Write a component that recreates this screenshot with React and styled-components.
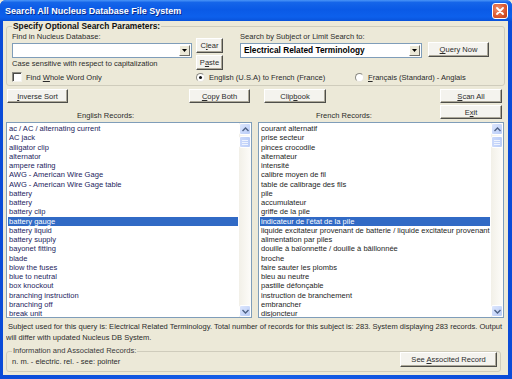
import React from 'react';
import styled, { createGlobalStyle } from 'styled-components';

const GlobalStyle = createGlobalStyle`
  html, body { margin: 0; padding: 0; background: #ECE9D8; }
  body { font-family: "Liberation Sans", Arial, sans-serif; font-size: 7.55px; color: #2b2b2b; }
  * { box-sizing: border-box; }
`;

const englishRecords = [
  'ac / AC / alternating current', 'AC jack', 'alligator clip', 'alternator', 'ampere rating',
  'AWG - American Wire Gage', 'AWG - American Wire Gage table', 'battery', 'battery', 'battery clip',
  'battery gauge', 'battery liquid', 'battery supply', 'bayonet fitting', 'blade', 'blow the fuses',
  'blue to neutral', 'box knockout', 'branching instruction', 'branching off', 'break unit',
];

const frenchRecords = [
  'courant alternatif', 'prise secteur', 'pinces crocodile', 'alternateur', 'intensité',
  'calibre moyen de fil', 'table de calibrage des fils', 'pile', 'accumulateur', 'griffe de la pile',
  "indicateur de l'état de la pile",
  'liquide excitateur provenant de batterie / liquide excitateur provenant de pile',
  'alimentation par piles', 'douille à baïonnette / douille à bâillonnée', 'broche',
  'faire sauter les plombs', 'bleu au neutre', 'pastille défonçable', 'instruction de branchement',
  'embrancher', 'disjoncteur',
];

const SELECTED = 10;

// window frame
const Window = styled.div`
  width: 512px;
  height: 379px;
  display: flex;
  flex-direction: column;
  background: linear-gradient(to right, #0A4BD8, #1660E8 50%, #0A4BD8);
  border-radius: 6px 6px 0 0;
  overflow: hidden;
`;

const TitleBar = styled.div`
  height: 21px;
  flex: none;
  display: flex;
  align-items: center;
  justify-content: space-between;
  padding: 0 4px 0 5px;
  background: linear-gradient(to bottom, #4A95F7 0%, #1565E9 12%, #0A5AE6 45%, #0D60EC 80%, #0852DA 100%);
  color: #fff;
  font-weight: bold;
  font-size: 9px;
  text-shadow: 1px 1px 0 #0B2A8A;
`;

const CloseButton = styled.div`
  width: 16px;
  height: 16px;
  border: 1px solid #fff;
  border-radius: 3px;
  background: radial-gradient(circle at 35% 35%, #F0906E, #D9572E 60%, #B83A17);
  display: flex;
  align-items: center;
  justify-content: center;
`;

const Body = styled.div`
  flex: 1;
  margin: 0 4px 4px 3px;
  padding: 0 3px 0 3px;
  background: #ECE9D8;
  display: flex;
  flex-direction: column;
`;

const GroupBox = styled.fieldset`
  margin: ${({ $mt }) => $mt || 0}px ${({ $mr }) => $mr || 0}px 0 0;
  padding: ${({ $pad }) => $pad};
  border: 1px solid #CFCCBC;
  border-radius: 3px;
  min-width: 0;
`;

const Legend = styled.legend`
  padding: 0 1px;
  line-height: 10px;
  font-size: ${({ $bold }) => ($bold ? '8.4px' : '7.55px')};
  font-weight: ${({ $bold }) => ($bold ? 'bold' : 'normal')};
  color: ${({ $bold }) => ($bold ? '#111' : '#3a3a3a')};
`;

const TopRow = styled.div`
  display: flex;
  align-items: flex-start;
`;

const Column = styled.div`
  display: flex;
  flex-direction: column;
  width: ${({ $w }) => ($w ? `${$w}px` : 'auto')};
  margin-left: ${({ $ml }) => $ml || 0}px;
  padding-top: ${({ $pt }) => $pt || 0}px;
  gap: ${({ $gap }) => $gap || 0}px;
`;

const Label = styled.div`
  line-height: 10px;
  white-space: nowrap;
  margin-top: ${({ $mt }) => $mt || 0}px;
`;

const Combo = styled.div`
  display: flex;
  width: ${({ $w }) => $w}px;
  height: 15px;
  margin-top: 1px;
  border: 1px solid #7F9DB9;
  background: #fff;
  padding: 1px;
`;

const ComboText = styled.div`
  flex: 1;
  padding-left: 2px;
  line-height: 11px;
  font-size: 8.3px;
  font-weight: bold;
  color: #000;
  white-space: nowrap;
  overflow: hidden;
`;

const DropButton = styled.div`
  width: 11px;
  background: #ECE9D8;
  border: 1px solid;
  border-color: #fff #6E6D67 #6E6D67 #fff;
  display: flex;
  align-items: center;
  justify-content: center;
`;

const Button = styled.div`
  width: ${({ $w }) => $w}px;
  height: ${({ $h }) => $h || 14}px;
  margin: ${({ $m }) => $m || 0};
  background: #F4F3EE;
  border: 1px solid;
  border-color: #FFFFFF #4E4E4A #4E4E4A #FFFFFF;
  box-shadow: inset -1px -1px 0 #ACA899;
  display: flex;
  align-items: center;
  justify-content: center;
  color: #2b2b2b;
  white-space: nowrap;
  grid-column: ${({ $col }) => $col || 'auto'};
  grid-row: ${({ $row }) => $row || 'auto'};
  align-self: ${({ $align }) => $align || 'auto'};

  u { text-decoration-thickness: 1px; text-underline-offset: 1px; }
`;

const OptionRow = styled.div`
  display: flex;
  align-items: center;
  height: 10px;
  margin-top: 2px;
`;

const Option = styled.div`
  display: flex;
  align-items: center;
  width: ${({ $w }) => ($w ? `${$w}px` : 'auto')};
  gap: 4px;
  white-space: nowrap;
`;

const CheckBox = styled.div`
  width: 10px;
  height: 10px;
  background: #fff;
  border: 1px solid;
  border-color: #8C8B82 #F4F3EE #F4F3EE #8C8B82;
  box-shadow: inset 1px 1px 0 #4A4A46;
`;

const Radio = styled.div`
  width: 9px;
  height: 9px;
  border-radius: 50%;
  background: #fff;
  border: 1px solid #8C8B82;
  border-right-color: #E8E6DC;
  border-bottom-color: #E8E6DC;
  display: flex;
  align-items: center;
  justify-content: center;

  &::after {
    content: '';
    width: 3px;
    height: 3px;
    border-radius: 50%;
    background: ${({ $on }) => ($on ? '#111' : 'transparent')};
  }
`;

const Panels = styled.div`
  display: grid;
  grid-template-columns: 246px 246px;
  column-gap: 6px;
  margin-top: 3px;
`;

const Panel = styled.div`
  display: grid;
  grid-template-columns: ${({ $cols }) => $cols};
  grid-template-rows: 14px 19px 196px;
`;

const PanelLabel = styled.div`
  grid-row: 2;
  grid-column: 1;
  align-self: end;
  line-height: 10px;
  padding-bottom: 1px;
  padding-left: ${({ $pl }) => $pl}px;
`;

const ListBox = styled.div`
  grid-row: 3;
  grid-column: 1 / -1;
  display: flex;
  border: 1px solid #7F9DB9;
  background: #fff;
`;

const Items = styled.div`
  flex: 1;
  min-width: 0;
  padding-top: 1px;
  overflow: hidden;
`;

const Item = styled.div`
  height: 9.25px;
  line-height: 9.25px;
  margin: 0 1px;
  padding-left: 1px;
  white-space: nowrap;
  color: ${({ $sel, $fg }) => ($sel ? '#fff' : $fg)};
  background: ${({ $sel }) => ($sel ? '#316AC5' : 'transparent')};
`;

const ScrollBar = styled.div`
  width: 12px;
  display: flex;
  flex-direction: column;
  background: linear-gradient(to right, #F2F0E8, #FDFCF9);
`;

const ScrollArrow = styled.div`
  height: 12px;
  border: 1px solid #fff;
  border-radius: 2px;
  background: linear-gradient(to bottom right, #DCE6FD, #B9CCF7);
  display: flex;
  align-items: center;
  justify-content: center;
  margin-top: ${({ $bottom }) => ($bottom ? 'auto' : '0')};
`;

const Thumb = styled.div`
  height: 12px;
  margin-top: 1px;
  border: 1px solid #fff;
  border-radius: 2px;
  background: linear-gradient(to right, #CBD9FB, #BACDF7);
  display: flex;
  flex-direction: column;
  align-items: center;
  justify-content: center;
  gap: 1px;

  span {
    width: 6px;
    height: 1px;
    background: #EEF3FE;
  }
`;

const StatusText = styled.div`
  margin-top: ${({ $first }) => ($first ? 3 : 0)}px;
  line-height: 11px;
  text-indent: ${({ $first }) => ($first ? 2 : 0)}px;
  white-space: nowrap;
  overflow: hidden;
`;

const InfoRow = styled.div`
  display: flex;
  justify-content: space-between;
  align-items: flex-start;
  margin-top: -4px;
`;

const InfoText = styled.div`
  margin-top: 5px;
  line-height: 10px;
`;

const Chevron = ({ down }) => (
  <svg width="7" height="5" viewBox="0 0 7 5">
    <path d={down ? 'M0.5 1 L3.5 4 L6.5 1' : 'M0.5 4 L3.5 1 L6.5 4'} fill="none" stroke="#4D6185" strokeWidth="1.4" />
  </svg>
);

const Triangle = () => (
  <svg width="5" height="3" viewBox="0 0 5 3">
    <path d="M0 0 H5 L2.5 3 Z" fill="#000" />
  </svg>
);

const List = ({ items, fg }) => (
  <ListBox>
    <Items>
      {items.map((t, i) => (
        <Item key={i} $sel={i === SELECTED} $fg={fg}>{t}</Item>
      ))}
    </Items>
    <ScrollBar>
      <ScrollArrow><Chevron /></ScrollArrow>
      <Thumb><span /><span /><span /></Thumb>
      <ScrollArrow $bottom><Chevron down /></ScrollArrow>
    </ScrollBar>
  </ListBox>
);

export default function App() {
  return (
    <>
      <GlobalStyle />
      <Window>
        <TitleBar>
          <span>Search All Nucleus Database File System</span>
          <CloseButton>
            <svg width="8" height="8" viewBox="0 0 8 8">
              <path d="M1 1 L7 7 M7 1 L1 7" stroke="#fff" strokeWidth="1.8" strokeLinecap="round" />
            </svg>
          </CloseButton>
        </TitleBar>
        <Body>
          <GroupBox $pad="1px 5px 3px 5px">
            <Legend $bold>Specify Optional Search Parameters:</Legend>
            <TopRow>
              <Column $w={180}>
                <Label>Find in Nucleus Database:</Label>
                <Combo $w={180}>
                  <ComboText />
                  <DropButton><Triangle /></DropButton>
                </Combo>
                <Label $mt={1}>Case sensitive with respect to capitalization</Label>
              </Column>
              <Column $w={27} $ml={4} $pt={6} $gap={2}>
                <Button $w={27} $h={15}><span>C<u>l</u>ear</span></Button>
                <Button $w={27} $h={15}><span>P<u>a</u>ste</span></Button>
              </Column>
              <Column $ml={17}>
                <Label>Search by Subject or Limit Search to:</Label>
                <TopRow>
                  <Combo $w={182}>
                    <ComboText>Electrical Related Terminology</ComboText>
                    <DropButton><Triangle /></DropButton>
                  </Combo>
                  <Button $w={61} $h={15} $m="0 0 0 6px"><span><u>Q</u>uery Now</span></Button>
                </TopRow>
              </Column>
            </TopRow>
            <OptionRow>
              <Option $w={184}>
                <CheckBox />
                <span>Find <u>W</u>hole Word Only</span>
              </Option>
              <Option $w={159}>
                <Radio $on />
                <span>English (U.S.A) to French (France)</span>
              </Option>
              <Option>
                <Radio />
                <span><u>F</u>rançais (Standard) - Anglais</span>
              </Option>
            </OptionRow>
          </GroupBox>

          <Panels>
            <Panel $cols="1fr 62px 1px">
              <Button $w={61} $m="0 0 0 1px" $col="1"><span><u>I</u>nverse Sort</span></Button>
              <Button $w={61} $col="2"><span><u>C</u>opy Both</span></Button>
              <PanelLabel $pl={71}>English Records:</PanelLabel>
              <List items={englishRecords} fg="#24245E" />
            </Panel>
            <Panel $cols="1fr 62px 2px">
              <Button $w={62} $m="0 0 0 6px" $col="1"><span>Clip<u>b</u>ook</span></Button>
              <Button $w={62} $col="2"><span><u>S</u>can All</span></Button>
              <PanelLabel $pl={58}>French Records:</PanelLabel>
              <Button $w={62} $h={14} $col="2" $row="2" $align="start" $m="2px 0 0 0"><span>E<u>x</u>it</span></Button>
              <List items={frenchRecords} fg="#1c1c1c" />
            </Panel>
          </Panels>

          <StatusText $first>
            Subject used for this query is: Electrical Related Terminology. Total number of records for this subject is: 283. System displaying 283 records. Output
          </StatusText>
          <StatusText>will differ with updated Nucleus DB System.</StatusText>

          <GroupBox $pad="0 3px 4px 5px" $mt={3} $mr={4}>
            <Legend>Information and Associated Records:</Legend>
            <InfoRow>
              <InfoText>n. m. - electric. rel. - see: pointer</InfoText>
              <Button $w={97} $h={15}><span>See <u>A</u>ssocited Record</span></Button>
            </InfoRow>
          </GroupBox>
        </Body>
      </Window>
    </>
  );
}
